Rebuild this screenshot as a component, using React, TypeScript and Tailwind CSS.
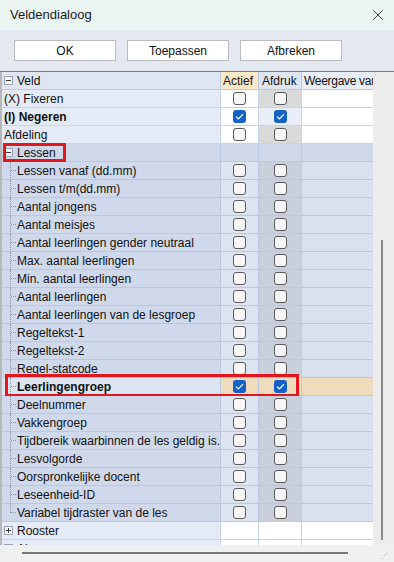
import { X } from "lucide-react";

type Row = {
  label: string;
  bold?: boolean;
  checked?: boolean;
  selected?: boolean;
};

const children: Row[] = [
  { label: "Lessen vanaf (dd.mm)" },
  { label: "Lessen t/m(dd.mm)" },
  { label: "Aantal jongens" },
  { label: "Aantal meisjes" },
  { label: "Aantal leerlingen gender neutraal" },
  { label: "Max. aantal leerlingen" },
  { label: "Min. aantal leerlingen" },
  { label: "Aantal leerlingen" },
  { label: "Aantal leerlingen van de lesgroep" },
  { label: "Regeltekst-1" },
  { label: "Regeltekst-2" },
  { label: "Regel-statcode" },
  { label: "Leerlingengroep", bold: true, checked: true, selected: true },
  { label: "Deelnummer" },
  { label: "Vakkengroep" },
  { label: "Tijdbereik waarbinnen de les geldig is." },
  { label: "Lesvolgorde" },
  { label: "Oorspronkelijke docent" },
  { label: "Leseenheid-ID" },
  { label: "Variabel tijdraster van de les" },
];

function Check({ on }: { on?: boolean }) {
  if (on) {
    return (
      <span className="flex h-[13px] w-[13px] items-center justify-center rounded-[3px] bg-[#1462c8]">
        <svg width="9" height="7" viewBox="0 0 9 7">
          <path d="M1 3.6 L3.4 5.8 L8 1.2" fill="none" stroke="#fff" strokeWidth="1.2" />
        </svg>
      </span>
    );
  }
  return <span className="block h-[13px] w-[13px] rounded-[3px] border border-[#5a5a5a] bg-[#f6f6f6]" />;
}

function Toggle({ plus }: { plus?: boolean }) {
  return (
    <span className="relative mr-[4px] block h-[9px] w-[9px] shrink-0 border border-[#9aa4b4] bg-[#f4f6fa]">
      <span className="absolute left-[1px] top-[3px] h-[1px] w-[5px] bg-[#3a3a3a]" />
      {plus && <span className="absolute left-[3px] top-[1px] h-[5px] w-[1px] bg-[#3a3a3a]" />}
    </span>
  );
}

export default function App() {
  return (
    <div className="flex h-[562px] w-[394px] flex-col overflow-hidden bg-[#f0f0f0] font-['Liberation_Sans',Arial,sans-serif] text-[12px] text-[#111]">
      <div className="flex h-[30px] shrink-0 items-center justify-between bg-[#eaf5f2] pl-[10px] pr-[7px]">
        <span className="text-[13px] text-[#1a1a1a]">Veldendialoog</span>
        <X className="size-[18px] text-[#222]" strokeWidth={1.1} />
      </div>

      <div className="flex h-[41px] shrink-0 items-center gap-[11px] bg-[#e4e9f1] pl-[14px]">
        {["OK", "Toepassen", "Afbreken"].map((b) => (
          <button
            key={b}
            className="flex h-[21px] w-[102px] items-center justify-center border border-[#bcbcbc] bg-white text-[12px] text-[#111]"
          >
            {b}
          </button>
        ))}
      </div>
      <div className="h-[1px] shrink-0 bg-[#7a7a7a]" />

      <div className="flex h-[473px] shrink-0 overflow-hidden">
        <div className="flex w-[373px] shrink-0 flex-col overflow-hidden border-l-[2px] border-[#b8b8b8]">
          {/* header */}
          <div className="flex h-[18px] shrink-0 border-b border-[#b9c9e2]">
            <div className="flex w-[219px] items-center border-r border-[#b9c9e2] bg-[#dfe6f2] pl-[2px]">
              <Toggle />
              <span>Veld</span>
            </div>
            <div className="flex w-[38px] items-center border-r border-[#b9c9e2] bg-[#fde8c8] pl-[2px]">Actief</div>
            <div className="flex w-[43px] items-center border-r border-[#b9c9e2] bg-[#dfe6f2] pl-[3px]">Afdruk</div>
            <div className="flex flex-1 items-center overflow-hidden whitespace-nowrap bg-[#e9eef6] pl-[2px] tracking-[-0.3px]">
              Weergave van
            </div>
          </div>

          {[
            { label: "(X) Fixeren", afdrukBg: "bg-[#dadada]" },
            { label: "(I) Negeren", bold: true, checked: true, afdrukBg: "bg-[#e9eef8]" },
            { label: "Afdeling", afdrukBg: "bg-[#dadada]" },
          ].map((r) => (
            <div key={r.label} className="flex h-[18px] shrink-0 border-b border-[#c6d3e8]">
              <div className={`flex w-[219px] items-center border-r border-[#c6d3e8] bg-[#e4ebf7] pl-[2px] ${r.bold ? "font-bold" : ""}`}>
                {r.label}
              </div>
              <div className="flex w-[38px] items-center justify-center border-r border-[#c6d3e8] bg-white">
                <Check on={r.checked} />
              </div>
              <div className={`flex w-[43px] items-center justify-center border-r border-[#c6d3e8] ${r.afdrukBg}`}>
                <Check on={r.checked} />
              </div>
              <div className="flex-1 bg-white" />
            </div>
          ))}

          {/* Lessen group */}
          <div className="flex h-[18px] shrink-0 border-b border-[#b9c9e2] bg-[#cfd8e8]">
            <div className="relative flex w-[219px] items-center border-r border-[#b9c9e2] pl-[2px]">
              <Toggle />
              <span>Lessen</span>
              <span className="absolute -bottom-[1px] left-[1px] top-[-1px] w-[63px] border-[3px] border-[#e3161b]" />
            </div>
            <div className="w-[38px] border-r border-[#b9c9e2]" />
            <div className="w-[43px] border-r border-[#b9c9e2]" />
            <div className="flex-1" />
          </div>

          {children.map((r, i) => (
            <div key={r.label} className="relative flex h-[18px] shrink-0 border-b border-[#b9c9e2]">
              <div
                className={`relative flex w-[219px] items-center border-r border-[#b9c9e2] pl-[15px] ${
                  r.selected ? "bg-[#dde5f2] font-bold" : "bg-[#d0d9eb]"
                }`}
              >
                <span
                  className={`absolute left-[8px] top-0 w-0 border-l border-dotted border-[#8c96a6] ${
                    i === children.length - 1 ? "h-[9px]" : "h-[18px]"
                  }`}
                />
                <span className="absolute left-[9px] top-[8px] w-[5px] border-t border-dotted border-[#8c96a6]" />
                <span className="whitespace-nowrap">{r.label}</span>
              </div>
              <div
                className={`flex w-[38px] items-center justify-center border-r border-[#b9c9e2] ${
                  r.selected ? "bg-[#efdcbc]" : "bg-[#dde3ef]"
                }`}
              >
                <Check on={r.checked} />
              </div>
              <div
                className={`flex w-[43px] items-center justify-center border-r border-[#b9c9e2] ${
                  r.selected ? "bg-[#efdcbc]" : "bg-[#c9d0dc]"
                }`}
              >
                <Check on={r.checked} />
              </div>
              <div className={`flex-1 ${r.selected ? "bg-[#efdcbc]" : "bg-[#dae1ee]"}`} />
              {r.selected && (
                <span className="pointer-events-none absolute -bottom-[2px] left-[3px] top-[-4px] w-[294px] border-[3px] border-[#e3161b]" />
              )}
            </div>
          ))}

          {["Rooster", "Algemeen"].map((g) => (
            <div key={g} className="flex h-[18px] shrink-0 border-b border-[#c6d3e8]">
              <div className="flex w-[219px] items-center border-r border-[#c6d3e8] bg-[#e4ebf7] pl-[2px]">
                <Toggle plus />
                <span>{g}</span>
              </div>
              <div className="w-[38px] border-r border-[#c6d3e8] bg-white" />
              <div className="w-[43px] border-r border-[#c6d3e8] bg-white" />
              <div className="flex-1 bg-white" />
            </div>
          ))}
        </div>

        {/* vertical scrollbar */}
        <div className="relative flex-1 bg-[#ececec]">
          <span className="absolute left-[8px] top-[168px] h-[300px] w-[2px] bg-[#8a8a8a]" />
        </div>
      </div>

      {/* horizontal scrollbar */}
      <div className="relative h-[17px] shrink-0 bg-[#f0f0f0]">
        <span className="absolute left-[22px] top-[7px] h-[2px] w-[326px] bg-[#7a7a7a]" />
        <span className="absolute bottom-[3px] right-[6px] text-[7px] leading-none text-[#9a9a9a]">⋰</span>
      </div>
    </div>
  );
}
